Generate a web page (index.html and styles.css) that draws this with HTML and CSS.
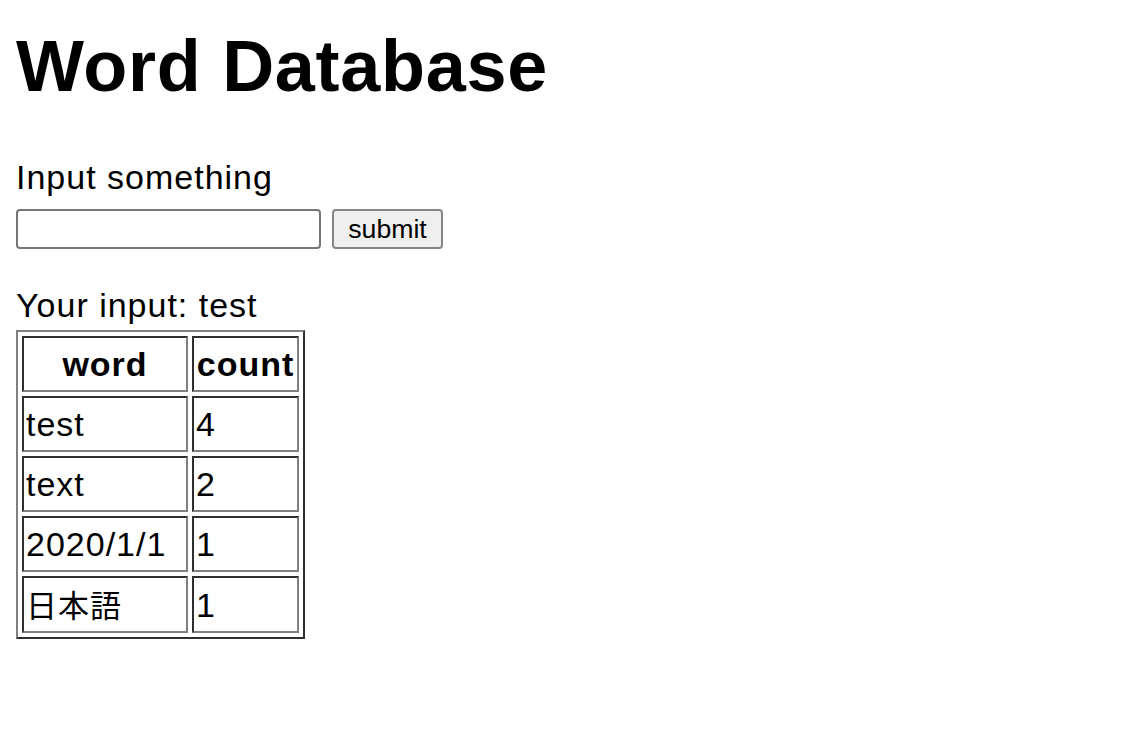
FILE: index.html
```html
<!DOCTYPE html>
<html lang="ja">
<head>
<meta charset="utf-8">
<title>Word Database</title>
<link rel="stylesheet" href="styles.css">
</head>
<body>
<main class="page">
  <h1 class="title">Word Database</h1>
  <form class="entry">
    <label class="label" for="word">Input something</label>
    <div class="form-row">
      <input class="text-input" id="word" type="text">
      <button class="submit" type="button">submit</button>
    </div>
  </form>
  <p class="result">Your input: test</p>
  <table class="words">
    <thead>
      <tr><th class="col-word">word</th><th class="col-count">count</th></tr>
    </thead>
    <tbody>
      <tr><td>test</td><td>4</td></tr>
      <tr><td>text</td><td>2</td></tr>
      <tr><td>2020/1/1</td><td>1</td></tr>
      <tr><td><span class="ja">日本語</span></td><td>1</td></tr>
    </tbody>
  </table>
</main>
</body>
</html>
```
FILE: styles.css
```css
html, body {
  margin: 0;
  padding: 0;
  background: #ffffff;
}

body {
  font-family: "Liberation Sans", "Noto Sans CJK JP", sans-serif;
  color: #000000;
}

.page {
  padding: 16px;
}

.title {
  margin: 2px 0 0 0;
  font-size: 72px;
  font-weight: bold;
  line-height: 96px;
  letter-spacing: 0.7px;
}

.entry {
  margin: 39px 0 0 0;
}

.label {
  display: block;
  font-size: 34px;
  line-height: 48px;
  letter-spacing: 1px;
}

.form-row {
  display: flex;
  gap: 11px;
  margin-top: 8px;
  height: 40px;
}

.text-input {
  box-sizing: border-box;
  width: 305px;
  height: 40px;
  margin: 0;
  border: 2px solid #767676;
  border-radius: 4px;
  background: #ffffff;
  padding: 2px 4px;
  font-size: 26px;
}

.submit {
  box-sizing: border-box;
  width: 111px;
  height: 40px;
  margin: 0;
  border: 2px solid #858585;
  border-radius: 4px;
  background: #efefef;
  font-family: "Liberation Sans", sans-serif;
  font-size: 26.67px;
  color: #000000;
  padding: 0;
}

.result {
  margin: 32px 0 0 0;
  font-size: 34px;
  line-height: 48px;
  letter-spacing: 1px;
}

.words {
  margin-top: 1px;
  border-collapse: separate;
  border-spacing: 4px;
  border-style: solid;
  border-width: 2px;
  border-color: #808080 #2e2e2e #2e2e2e #808080;
}

.words th,
.words td {
  border-style: solid;
  border-width: 2px;
  border-color: #2e2e2e #808080 #808080 #2e2e2e;
  padding: 2px;
  font-size: 34px;
  line-height: 48px;
  letter-spacing: 1px;
  height: 48px;
  text-align: left;
  white-space: nowrap;
}

.words th {
  font-weight: bold;
  text-align: center;
}

.col-word {
  width: 158px;
  box-sizing: content-box;
}

.col-count {
  width: 99px;
  box-sizing: content-box;
}

.ja {
  font-family: "Noto Sans CJK JP", sans-serif;
  font-size: 31px;
  letter-spacing: 1px;
}
```
